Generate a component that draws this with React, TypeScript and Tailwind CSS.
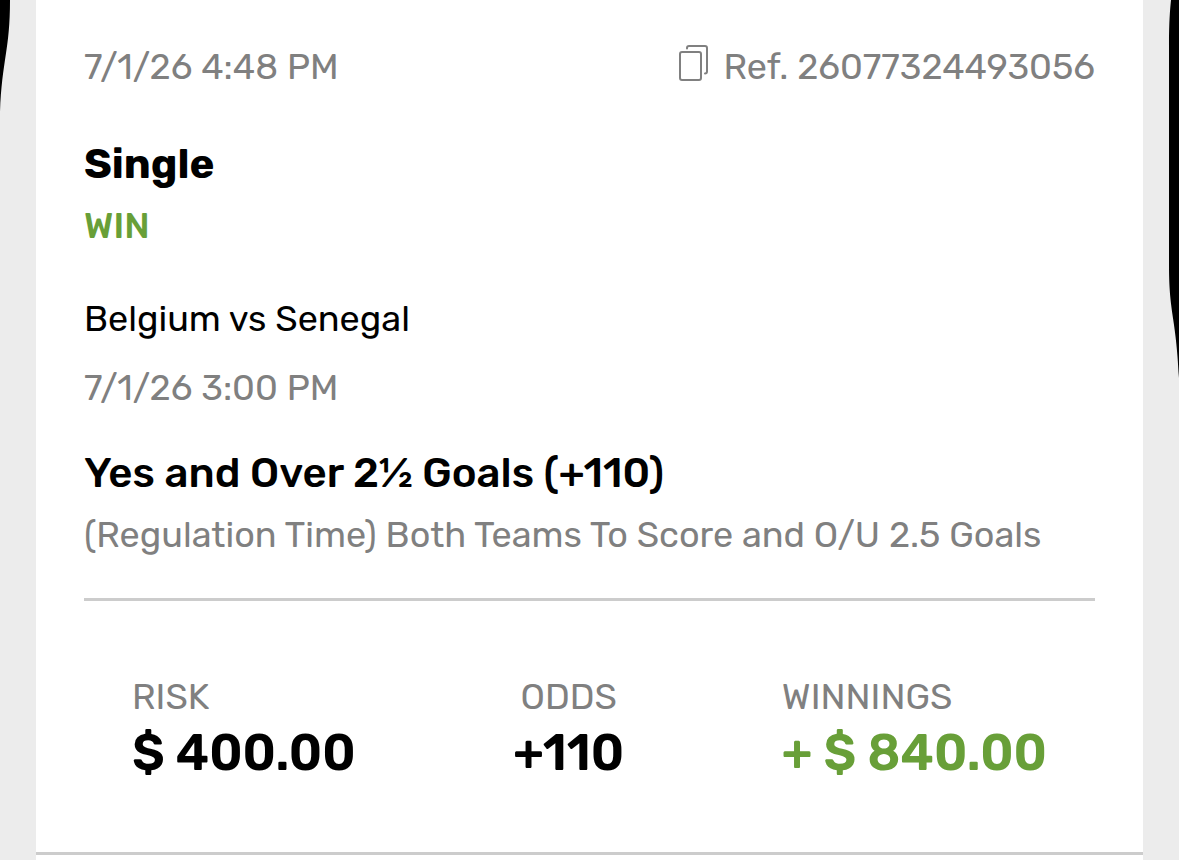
const font = "font-['Rubik','Roboto',sans-serif]";

const totals = [
  { label: 'RISK', value: '$ 400.00', align: 'text-left', color: 'text-black' },
  { label: 'ODDS', value: '+110', align: 'text-center', color: 'text-black' },
  { label: 'WINNINGS', value: '+ $ 840.00', align: 'text-left', color: 'text-[#689f38]' },
];

function CopyIcon() {
  return (
    <svg width="32" height="44" viewBox="0 0 32 44" fill="none" stroke="#808080" strokeWidth="2" strokeLinecap="round" aria-hidden="true">
      <rect x="2" y="7" width="21" height="28" rx="2" />
      <path d="M9 3V2.5a2 2 0 0 1 2-2h16a2 2 0 0 1 2 2V26a2 2 0 0 1-2 2" transform="translate(0 .5)" />
    </svg>
  );
}

export default function App() {
  return (
    <div className={`relative flex min-h-screen flex-col overflow-hidden bg-[#ececec] px-9 text-black ${font}`}>
      <svg className="absolute left-0 top-0" width="12" height="120" viewBox="0 0 12 120" aria-hidden="true">
        <path d="M0 0H10C10 50 2 60 0 112Z" fill="#000" />
      </svg>
      <svg className="absolute right-0 top-0" width="12" height="380" viewBox="0 0 12 380" aria-hidden="true">
        <path d="M4 0C3 10 2 22 2 45V265C2 315 9 315 12 378V0Z" fill="#000" />
      </svg>

      <article className="border-b-3 border-[#cccccc] bg-white px-12 pt-[45px] pb-[71px]">
        <header className="flex items-center justify-between text-[36px] leading-[44px] text-[#808080]">
          <time>7/1/26 4:48 PM</time>
          <button type="button" className="flex items-center gap-[13px]">
            <CopyIcon />
            Ref. 26077324493056
          </button>
        </header>

        <h1 className="mt-[49px] text-[42px] font-bold leading-[52px]">Single</h1>
        <p className="mt-[14px] text-[36px] font-medium leading-[44px] text-[#689f38]">WIN</p>

        <p className="mt-[49px] text-[36px] leading-[44px]">Belgium vs Senegal</p>
        <p className="mt-[25px] text-[36px] leading-[44px] text-[#808080]">7/1/26 3:00 PM</p>
        <h2 className="mt-[37px] text-[42px] font-medium leading-[52px]">Yes and Over 2½ Goals (+110)</h2>
        <p className="mt-[14px] text-[36px] leading-[44px] text-[#808080]">
          (Regulation Time) Both Teams To Score and O/U 2.5 Goals
        </p>
        <hr className="mt-[41px] border-t-3 border-[#cccccc]" />

        <dl className="mt-[74px] flex justify-between px-12">
          {totals.map((item) => (
            <div key={item.label} className={item.align}>
              <dt className="text-[36px] leading-[44px] text-[#808080]">{item.label}</dt>
              <dd className={`mt-[6px] text-[50px] font-semibold leading-[56px] ${item.color}`}>{item.value}</dd>
            </div>
          ))}
        </dl>
      </article>
      <div className="flex-1 bg-white" />
    </div>
  );
}
